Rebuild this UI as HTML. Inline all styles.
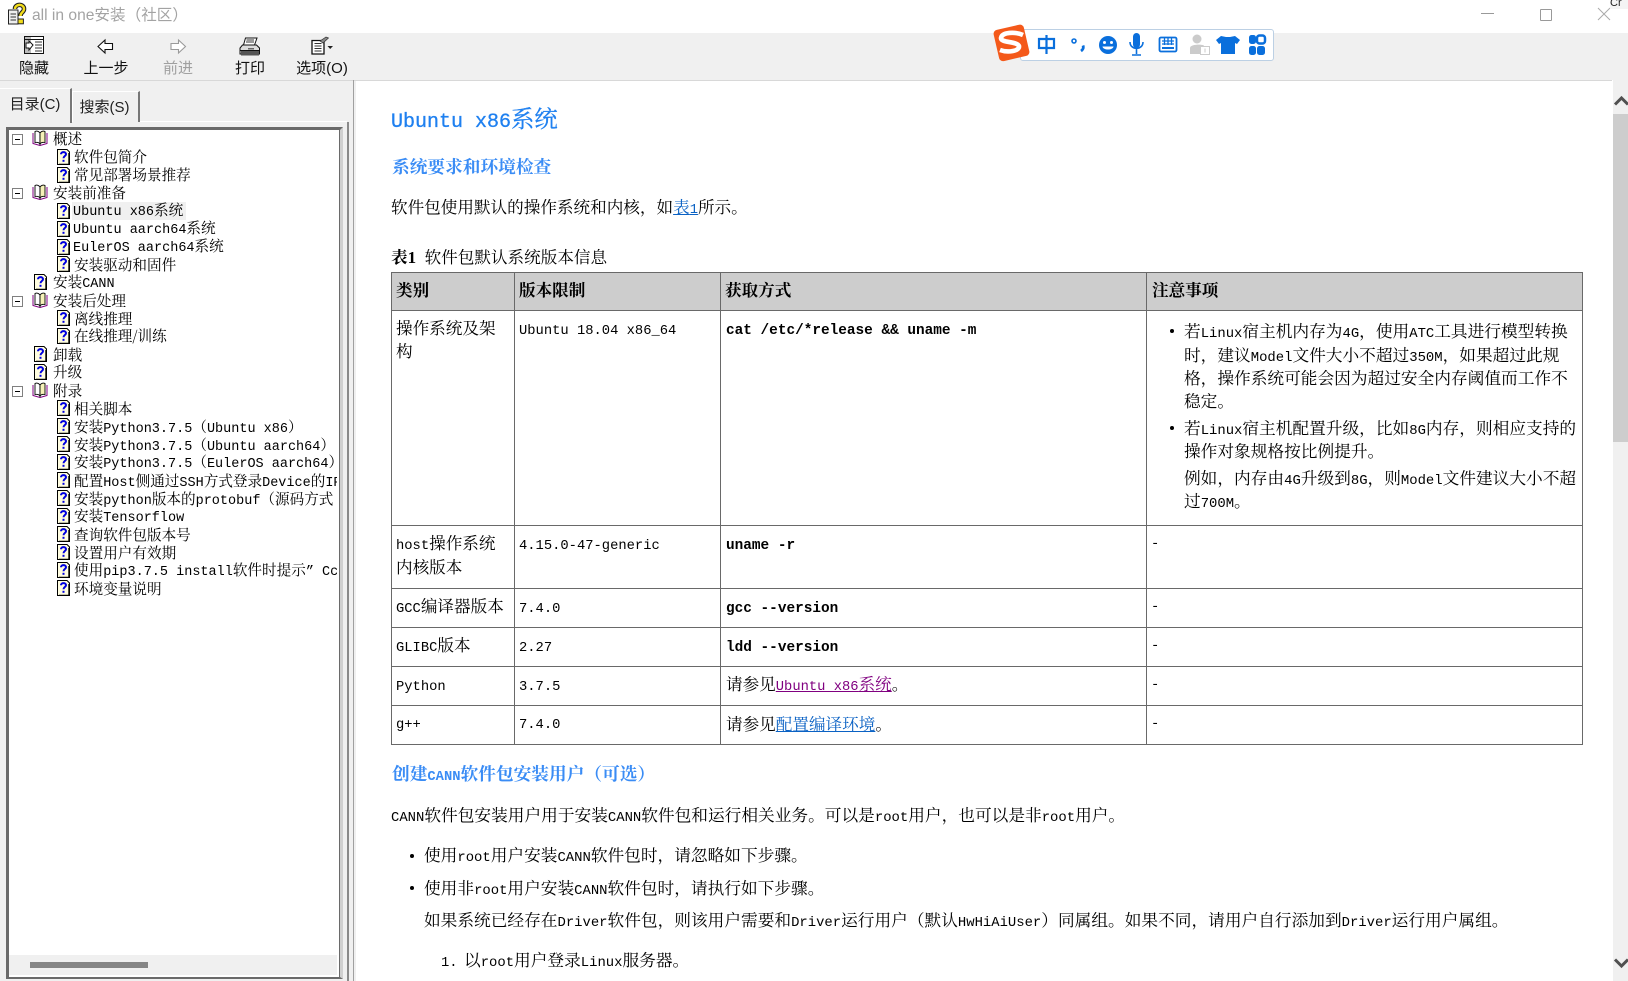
<!DOCTYPE html>
<html lang="zh"><head><meta charset="utf-8"><title>all in one安装（社区）</title>
<style>
html,body{margin:0;padding:0;background:#fff}
#r{position:relative;width:1628px;height:981px;overflow:hidden;background:#fff;font-family:"Noto Serif CJK SC","Liberation Serif",serif;color:#000}
#r div{position:absolute}
.t{white-space:nowrap;font-size:16.6px;line-height:24px;height:24px}
.t i{font-style:normal;font-family:"Liberation Mono",monospace;font-size:13.8px}
.w{font-size:16.7px}
.w i{font-size:13.9px}
.b{font-weight:700}
.u{font-family:"Liberation Sans","Noto Sans CJK SC",sans-serif;font-size:15px;line-height:20px;height:20px;white-space:nowrap;text-align:center;color:#111}
.l{background:#696969}
.tr{white-space:nowrap;font-size:14.6px;line-height:18px;height:18px}
.tr i{font-style:normal;font-family:"Liberation Mono",monospace;font-size:13.5px}
.m{font-family:"Liberation Mono",monospace;font-weight:700;font-size:14.4px;white-space:nowrap;line-height:24px;height:24px}
.d{width:4px;height:4px;border-radius:50%;background:#000}
a{color:#0b62c4;text-decoration:underline}
svg{position:absolute;overflow:visible}
</style></head><body>
<div id="r">
<svg width="0" height="0" style="position:absolute"><defs>
<symbol id="doc" viewBox="0 0 13 16"><path d="M.5.5H10L12.5 3V15.5H.5Z" fill="#fffde0" stroke="#000"/><path d="M12 4V15.5H2" fill="none" stroke="#000" stroke-width="1.4"/><path d="M4 5.2C4 2.4 9 2.4 9 5.2 9 7 6.5 7 6.5 9.2" fill="none" stroke="#0000e0" stroke-width="2"/><rect x="5.5" y="10.8" width="2" height="2" fill="#0000e0"/></symbol>
<symbol id="book" viewBox="0 0 16 16"><path d="M1 3V13.5L8 15.5 15 13.5V3" fill="#fff" stroke="#800080" stroke-width="1"/><path d="M3 1.500C5 .5 7 1.500 8 3V14C7 12.500 5 12 3 12.500Z" fill="#fff" stroke="#000" stroke-width=".9"/><path d="M13 1.500C11 .5 9 1.500 8 3V14C9 12.500 11 12 13 12.500Z" fill="#f6f2b8" stroke="#000" stroke-width=".9"/></symbol>
<symbol id="min" viewBox="0 0 12 12"><rect x=".5" y=".5" width="10" height="10" fill="#fff" stroke="#808080"/><path d="M3 5.5H8" stroke="#000"/></symbol>
</defs></svg>

<!-- title bar -->
<svg style="left:7px;top:3px" width="20" height="22" viewBox="0 0 20 22"><path d="M1.5 7H11V21H1.5Z" fill="#eee" stroke="#222"/><path d="M3.5 11H9M3.5 14H9M3.5 17H9" stroke="#333"/><path d="M8 6C8 .5 17 .5 17 6 17 9.5 13.5 9 13.5 13" fill="none" stroke="#222" stroke-width="4.6"/><path d="M8 6C8 .5 17 .5 17 6 17 9.5 13.5 9 13.5 13" fill="none" stroke="#f2dc1a" stroke-width="2.4"/><rect x="11" y="16" width="5.4" height="4.8" fill="#f2dc1a" stroke="#222"/></svg>
<div style="left:32px;top:5px;height:22px;line-height:22px;white-space:nowrap;color:#a3a3a3;font-family:'Liberation Sans','Noto Sans CJK SC',sans-serif;font-size:15.6px">all in one<span style="font-size:15.6px">安装（社区）</span></div>
<div style="left:1481px;top:13px;width:13px;height:1px;background:#999"></div>
<div style="left:1540px;top:9px;width:10px;height:10px;border:1px solid #999;border-radius:1px"></div>
<svg style="left:1598px;top:8px" width="12" height="12"><path d="M0 0L12 12M12 0L0 12" stroke="#aaa"/></svg>
<div style="left:1610px;top:0;width:18px;height:9px;background:#f4f4f4;overflow:hidden;font:11px/6px 'Liberation Sans',sans-serif;color:#222">Cr</div>

<!-- toolbar -->
<div style="left:0;top:33px;width:1628px;height:47px;background:#f0f0f0"></div>
<svg style="left:24px;top:36px" width="21" height="19" viewBox="0 0 21 19"><rect x=".5" y=".5" width="19" height="17" fill="#fff" stroke="#111"/><rect x="1" y="1" width="6" height="16" fill="#bbb"/><path d="M.5 3.5H19.5" stroke="#111"/><path d="M11 6H18M11 9H18M11 12H18M11 15H18" stroke="#333"/><path d="M2 9L6 5V7H9V12H6V14Z" fill="#fff" stroke="#111" transform="matrix(-1 0 0 1 11 0)"/></svg>
<svg style="left:97px;top:39px" width="17" height="15" viewBox="0 0 17 15"><path d="M1 7.5L8 1V4.5H15.5V10.5H8V14Z" fill="#fff" stroke="#111" stroke-width="1.1"/></svg>
<svg style="left:170px;top:39px" width="17" height="15" viewBox="0 0 17 15"><path d="M15.5 7.5L8.5 1V4.5H1V10.5H8.5V14Z" fill="#fff" stroke="#9a9a9a" stroke-width="1.1"/></svg>
<svg style="left:239px;top:37px" width="22" height="20" viewBox="0 0 22 20"><path d="M6.5 1H18L15.5 8H4.5Z" fill="#fff" stroke="#111"/><path d="M7.5 3H15M7 5H15" stroke="#333"/><path d="M3.5 8H17.5L20.5 11V17H1V11Z" fill="#dcdcdc" stroke="#111"/><path d="M1 13.5H20.5" stroke="#111"/><path d="M2 14H20V18.5H2Z" fill="#555"/><rect x="9" y="11" width="6" height="1.5" fill="#666"/></svg>
<svg style="left:311px;top:36px" width="24" height="19" viewBox="0 0 24 19"><path d="M1 4.5H13V18H1Z" fill="#fff" stroke="#111" stroke-width="1.3"/><path d="M3.5 7.5H10.5M3.5 10H10.5M3.5 12.5H10.5M3.5 15H10.5" stroke="#333"/><path d="M9 5L15 1 17.5 2 12 7Z" fill="#888" stroke="#333" stroke-width=".7"/><path d="M16.5 10H22L19.2 13Z" fill="#222"/></svg>
<div class="u" style="left:4px;top:59px;width:60px">隐藏</div>
<div class="u" style="left:76px;top:59px;width:60px">上一步</div>
<div class="u" style="left:148px;top:59px;width:60px;color:#a0a0a0">前进</div>
<div class="u" style="left:220px;top:59px;width:60px">打印</div>
<div class="u" style="left:282px;top:59px;width:80px">选项(O)</div>

<!-- sogou -->
<div style="left:1020px;top:29px;width:252px;height:30px;background:#fff;border:1px solid #bcd0e4;border-radius:3px"></div>
<svg style="left:990px;top:22px" width="42" height="42" viewBox="0 0 42 42"><rect x="6" y="5" width="31" height="32" rx="4" fill="#f4591a" transform="rotate(-13 21 21)"/><path d="M33 13C25 9.500 12 10 11 16 10.500 21 27 19 29 24 30 29 18 31 10 28" fill="none" stroke="#fff" stroke-width="4.600"/></svg>
<svg style="left:1036px;top:30px" width="230" height="30" viewBox="0 0 230 30" fill="#0a6fdc">
<path d="M3 9H18V18H3ZM10.500 5V24" fill="none" stroke="#0a6fdc" stroke-width="2.200"/>
<circle cx="38" cy="11" r="2" fill="none" stroke="#0a6fdc" stroke-width="1.600"/><path d="M47 15.500C48 18 46.500 20 45 21" fill="none" stroke="#0a6fdc" stroke-width="2.800"/>
<circle cx="72" cy="15" r="9"/><circle cx="68.500" cy="12.500" r="1.500" fill="#fff"/><circle cx="75.500" cy="12.500" r="1.500" fill="#fff"/><path d="M66.500 16.500H77.500C77 20.500 67 20.500 66.500 16.500Z" fill="#fff"/>
<rect x="97" y="3" width="7" height="15" rx="3.500"/><path d="M94 12C94 20.500 107 20.500 107 12M100.500 19V24M96 25H105" fill="none" stroke="#0a6fdc" stroke-width="1.600"/>
<rect x="123.500" y="7.500" width="17" height="14" rx="1.500" fill="none" stroke="#0a6fdc" stroke-width="1.800"/><path d="M126 11H138M126 14H138M128.500 8V15M132 8V15M135.500 8V15" stroke="#0a6fdc" stroke-width="1.300"/><rect x="126" y="17" width="12" height="2"/>
<g fill="#cbcbcb"><circle cx="161" cy="9" r="4.500"/><path d="M154 24V18C154 14 168 14 168 16V24Z"/></g><rect x="164.500" y="16.500" width="9" height="8" fill="#fff" stroke="#cbcbcb"/><path d="M169 18.500V22.500" stroke="#cbcbcb"/>
<path d="M185 6L190 7H194L199 6 204 10 201 14 199 13V24H185V13L183 14 180 10Z"/>
<rect x="221" y="5.500" width="8" height="8" rx="2.500" fill="none" stroke="#0a6fdc" stroke-width="2.500"/><rect x="213" y="5" width="7" height="9" rx="2.500"/><rect x="213" y="16" width="7" height="9" rx="2.500"/><rect x="221" y="16" width="8" height="9" rx="2.500"/>
</svg>

<!-- left pane -->
<div style="left:0;top:80px;width:356px;height:901px;background:#f0f0f0"></div>
<div style="left:0;top:80px;width:1612px;height:1px;background:#d8d8d8"></div>
<div style="left:347px;top:122px;width:2px;height:859px;background:#8a8a8a"></div>
<div style="left:353px;top:80px;width:1px;height:901px;background:#a0a0a0"></div>
<div style="left:0;top:121px;width:347px;height:1px;background:#fff"></div>
<div style="left:0;top:88px;width:70px;height:34px;border-top:1px solid #fff;border-right:2px solid #777;background:#f0f0f0"></div>
<div style="left:72px;top:91px;width:65px;height:30px;border-top:1px solid #fff;border-left:1px solid #fff;border-right:2px solid #777;background:#f0f0f0"></div>
<div class="u" style="left:0;top:95px;width:70px;color:#222">目录(C)</div>
<div class="u" style="left:72px;top:98px;width:65px;color:#222">搜索(S)</div>
<div style="left:6px;top:127px;width:331px;height:847px;border:3px solid #6a6a6a;border-right:3px solid #d0d0d0;border-bottom:2px solid #6a6a6a;background:#fff;outline:0"></div>
<div style="left:339px;top:127px;width:1px;height:851px;background:#6a6a6a"></div>
<div style="left:9px;top:955px;width:328px;height:20px;background:#f0f0f0"></div>
<div style="left:30px;top:962px;width:118px;height:6px;background:#868686"></div>
<div style="left:72px;top:202px;width:114px;height:18px;background:#f0f0f0"></div>

<svg style="left:12px;top:134px" width="12" height="12"><use href="#min"/></svg>
<svg style="left:32px;top:130px" width="16" height="16"><use href="#book"/></svg>
<svg style="left:12px;top:188px" width="12" height="12"><use href="#min"/></svg>
<svg style="left:32px;top:184px" width="16" height="16"><use href="#book"/></svg>
<svg style="left:12px;top:296px" width="12" height="12"><use href="#min"/></svg>
<svg style="left:32px;top:292px" width="16" height="16"><use href="#book"/></svg>
<svg style="left:12px;top:386px" width="12" height="12"><use href="#min"/></svg>
<svg style="left:32px;top:382px" width="16" height="16"><use href="#book"/></svg>

<svg style="left:57px;top:149px" width="13" height="16"><use href="#doc"/></svg>
<svg style="left:57px;top:167px" width="13" height="16"><use href="#doc"/></svg>
<svg style="left:57px;top:203px" width="13" height="16"><use href="#doc"/></svg>
<svg style="left:57px;top:221px" width="13" height="16"><use href="#doc"/></svg>
<svg style="left:57px;top:239px" width="13" height="16"><use href="#doc"/></svg>
<svg style="left:57px;top:256px" width="13" height="16"><use href="#doc"/></svg>
<svg style="left:34px;top:274px" width="13" height="16"><use href="#doc"/></svg>
<svg style="left:57px;top:310px" width="13" height="16"><use href="#doc"/></svg>
<svg style="left:57px;top:328px" width="13" height="16"><use href="#doc"/></svg>
<svg style="left:34px;top:346px" width="13" height="16"><use href="#doc"/></svg>
<svg style="left:34px;top:364px" width="13" height="16"><use href="#doc"/></svg>
<svg style="left:57px;top:400px" width="13" height="16"><use href="#doc"/></svg>
<svg style="left:57px;top:418px" width="13" height="16"><use href="#doc"/></svg>
<svg style="left:57px;top:436px" width="13" height="16"><use href="#doc"/></svg>
<svg style="left:57px;top:454px" width="13" height="16"><use href="#doc"/></svg>
<svg style="left:57px;top:472px" width="13" height="16"><use href="#doc"/></svg>
<svg style="left:57px;top:490px" width="13" height="16"><use href="#doc"/></svg>
<svg style="left:57px;top:508px" width="13" height="16"><use href="#doc"/></svg>
<svg style="left:57px;top:526px" width="13" height="16"><use href="#doc"/></svg>
<svg style="left:57px;top:544px" width="13" height="16"><use href="#doc"/></svg>
<svg style="left:57px;top:562px" width="13" height="16"><use href="#doc"/></svg>
<svg style="left:57px;top:580px" width="13" height="16"><use href="#doc"/></svg>

<div style="left:9px;top:129px;width:328px;height:500px;overflow:hidden">
<div class="tr" style="left:44px;top:1px">概述</div>
<div class="tr" style="left:65px;top:19px">软件包简介</div>
<div class="tr" style="left:65px;top:37px">常见部署场景推荐</div>
<div class="tr" style="left:44px;top:55px">安装前准备</div>
<div class="tr" style="left:64px;top:72px"><i>Ubuntu x86</i>系统</div>
<div class="tr" style="left:64px;top:90px"><i>Ubuntu aarch64</i>系统</div>
<div class="tr" style="left:64px;top:108px"><i>EulerOS aarch64</i>系统</div>
<div class="tr" style="left:65px;top:127px">安装驱动和固件</div>
<div class="tr" style="left:44px;top:144px">安装<i>CANN</i></div>
<div class="tr" style="left:44px;top:163px">安装后处理</div>
<div class="tr" style="left:65px;top:181px">离线推理</div>
<div class="tr" style="left:65px;top:198px">在线推理/训练</div>
<div class="tr" style="left:44px;top:217px">卸载</div>
<div class="tr" style="left:44px;top:234px">升级</div>
<div class="tr" style="left:44px;top:253px">附录</div>
<div class="tr" style="left:65px;top:271px">相关脚本</div>
<div class="tr" style="left:65px;top:289px">安装<i>Python3.7.5</i>（<i>Ubuntu x86</i>）</div>
<div class="tr" style="left:65px;top:307px">安装<i>Python3.7.5</i>（<i>Ubuntu aarch64</i>）</div>
<div class="tr" style="left:65px;top:324px">安装<i>Python3.7.5</i>（<i>EulerOS aarch64</i>）</div>
<div class="tr" style="left:65px;top:343px">配置<i>Host</i>侧通过<i>SSH</i>方式登录<i>Device</i>的<i>IP</i></div>
<div class="tr" style="left:65px;top:361px">安装<i>python</i>版本的<i>protobuf</i>（源码方式</div>
<div class="tr" style="left:65px;top:378px">安装<i>Tensorflow</i></div>
<div class="tr" style="left:65px;top:397px">查询软件包版本号</div>
<div class="tr" style="left:65px;top:415px">设置用户有效期</div>
<div class="tr" style="left:65px;top:432px">使用<i>pip3.7.5 install</i>软件时提示<i>” Cc</i></div>
<div class="tr" style="left:65px;top:451px">环境变量说明</div>
</div>

<!-- scrollbar -->
<div style="left:1613px;top:80px;width:15px;height:901px;background:#f0f0f0"></div>
<div style="left:1613px;top:114px;width:15px;height:328px;background:#cdcdcd"></div>
<svg style="left:1615px;top:96px" width="13" height="10"><path d="M0 8.500L6.500 2 13 8.500" fill="none" stroke="#505050" stroke-width="3"/></svg>
<svg style="left:1615px;top:958px" width="13" height="10"><path d="M0 1.500L6.500 8 13 1.500" fill="none" stroke="#505050" stroke-width="3"/></svg>

<!-- content -->
<div class="t" style="left:391px;top:101px;height:32px;line-height:32px;font-size:23.3px;color:#1f80f0;-webkit-text-stroke:.3px #1f80f0"><i style="font-size:20px">Ubuntu x86</i>系统</div>
<div class="t b" style="left:392px;top:155px;font-size:17.7px;color:#3a8cf5">系统要求和环境检查</div>
<div class="t" style="left:391px;top:194px">软件包使用默认的操作系统和内核，如<a>表<i>1</i></a>所示。</div>
<div class="t" style="left:391px;top:244px"><span class="b">表<span style="font-family:'Liberation Serif',serif;font-size:17px">1</span></span> &nbsp;软件包默认系统版本信息</div>

<div style="left:391px;top:272px;width:1192px;height:38px;background:#cdcdcd"></div>
<div class="l" style="left:391px;top:272px;width:1192px;height:1px"></div>
<div class="l" style="left:391px;top:310px;width:1192px;height:1px"></div>
<div class="l" style="left:391px;top:525px;width:1192px;height:1px"></div>
<div class="l" style="left:391px;top:588px;width:1192px;height:1px"></div>
<div class="l" style="left:391px;top:627px;width:1192px;height:1px"></div>
<div class="l" style="left:391px;top:666px;width:1192px;height:1px"></div>
<div class="l" style="left:391px;top:705px;width:1192px;height:1px"></div>
<div class="l" style="left:391px;top:744px;width:1192px;height:1px"></div>
<div class="l" style="left:391px;top:272px;width:1px;height:473px"></div>
<div class="l" style="left:514px;top:272px;width:1px;height:473px"></div>
<div class="l" style="left:720px;top:272px;width:1px;height:473px"></div>
<div class="l" style="left:1146px;top:272px;width:1px;height:473px"></div>
<div class="l" style="left:1582px;top:272px;width:1px;height:473px"></div>

<div class="t b" style="left:396px;top:277px">类别</div>
<div class="t b" style="left:519px;top:277px">版本限制</div>
<div class="t b" style="left:725px;top:277px">获取方式</div>
<div class="t b" style="left:1152px;top:277px">注意事项</div>

<div class="t" style="left:396px;top:315px">操作系统及架</div>
<div class="t" style="left:396px;top:338px">构</div>
<div class="t" style="left:519px;top:315px"><i>Ubuntu 18.04 x86_64</i></div>
<div class="m" style="left:726px;top:319px">cat /etc/*release &amp;&amp; uname -m</div>

<div class="d" style="left:1170px;top:329px"></div>
<div class="t w" style="left:1184px;top:318px">若<i>Linux</i>宿主机内存为<i>4G</i>，使用<i>ATC</i>工具进行模型转换</div>
<div class="t w" style="left:1184px;top:342px">时，建议<i>Model</i>文件大小不超过<i>350M</i>，如果超过此规</div>
<div class="t w" style="left:1184px;top:365px">格，操作系统可能会因为超过安全内存阈值而工作不</div>
<div class="t w" style="left:1184px;top:388px">稳定。</div>
<div class="d" style="left:1170px;top:426px"></div>
<div class="t w" style="left:1184px;top:415px">若<i>Linux</i>宿主机配置升级，比如<i>8G</i>内存，则相应支持的</div>
<div class="t w" style="left:1184px;top:438px">操作对象规格按比例提升。</div>
<div class="t w" style="left:1184px;top:465px">例如，内存由<i>4G</i>升级到<i>8G</i>，则<i>Model</i>文件建议大小不超</div>
<div class="t w" style="left:1184px;top:488px">过<i>700M</i>。</div>

<div class="t" style="left:396px;top:530px"><i>host</i>操作系统</div>
<div class="t" style="left:396px;top:554px">内核版本</div>
<div class="t" style="left:519px;top:530px"><i>4.15.0-47-generic</i></div>
<div class="m" style="left:726px;top:534px">uname -r</div>
<div class="t" style="left:1151px;top:528px"><i>-</i></div>

<div class="t" style="left:396px;top:593px"><i>GCC</i>编译器版本</div>
<div class="t" style="left:519px;top:593px"><i>7.4.0</i></div>
<div class="m" style="left:726px;top:597px">gcc --version</div>
<div class="t" style="left:1151px;top:591px"><i>-</i></div>

<div class="t" style="left:396px;top:632px"><i>GLIBC</i>版本</div>
<div class="t" style="left:519px;top:632px"><i>2.27</i></div>
<div class="m" style="left:726px;top:636px">ldd --version</div>
<div class="t" style="left:1151px;top:630px"><i>-</i></div>

<div class="t" style="left:396px;top:671px"><i>Python</i></div>
<div class="t" style="left:519px;top:671px"><i>3.7.5</i></div>
<div class="t" style="left:726px;top:671px">请参见<a style="color:#800080"><i>Ubuntu x86</i>系统</a>。</div>
<div class="t" style="left:1151px;top:669px"><i>-</i></div>

<div class="t" style="left:396px;top:709px"><i>g++</i></div>
<div class="t" style="left:519px;top:709px"><i>7.4.0</i></div>
<div class="t" style="left:726px;top:711px">请参见<a>配置编译环境</a>。</div>
<div class="t" style="left:1151px;top:708px"><i>-</i></div>

<div class="t b" style="left:392px;top:762px;font-size:17.7px;color:#3a8cf5">创建<i class="b">CANN</i>软件包安装用户（可选）</div>
<div class="t w" style="left:391px;top:802px"><i>CANN</i>软件包安装用户用于安装<i>CANN</i>软件包和运行相关业务。可以是<i>root</i>用户，也可以是非<i>root</i>用户。</div>
<div class="d" style="left:410px;top:854px"></div>
<div class="t w" style="left:424px;top:842px">使用<i>root</i>用户安装<i>CANN</i>软件包时，请忽略如下步骤。</div>
<div class="d" style="left:410px;top:886px"></div>
<div class="t w" style="left:424px;top:875px">使用非<i>root</i>用户安装<i>CANN</i>软件包时，请执行如下步骤。</div>
<div class="t w" style="left:424px;top:907px">如果系统已经存在<i>Driver</i>软件包，则该用户需要和<i>Driver</i>运行用户（默认<i>HwHiAiUser</i>）同属组。如果不同，请用户自行添加到<i>Driver</i>运行用户属组。</div>
<div class="t" style="left:441px;top:947px"><i>1.</i></div>
<div class="t w" style="left:464px;top:947px">以<i>root</i>用户登录<i>Linux</i>服务器。</div>
</div>
</body></html>
